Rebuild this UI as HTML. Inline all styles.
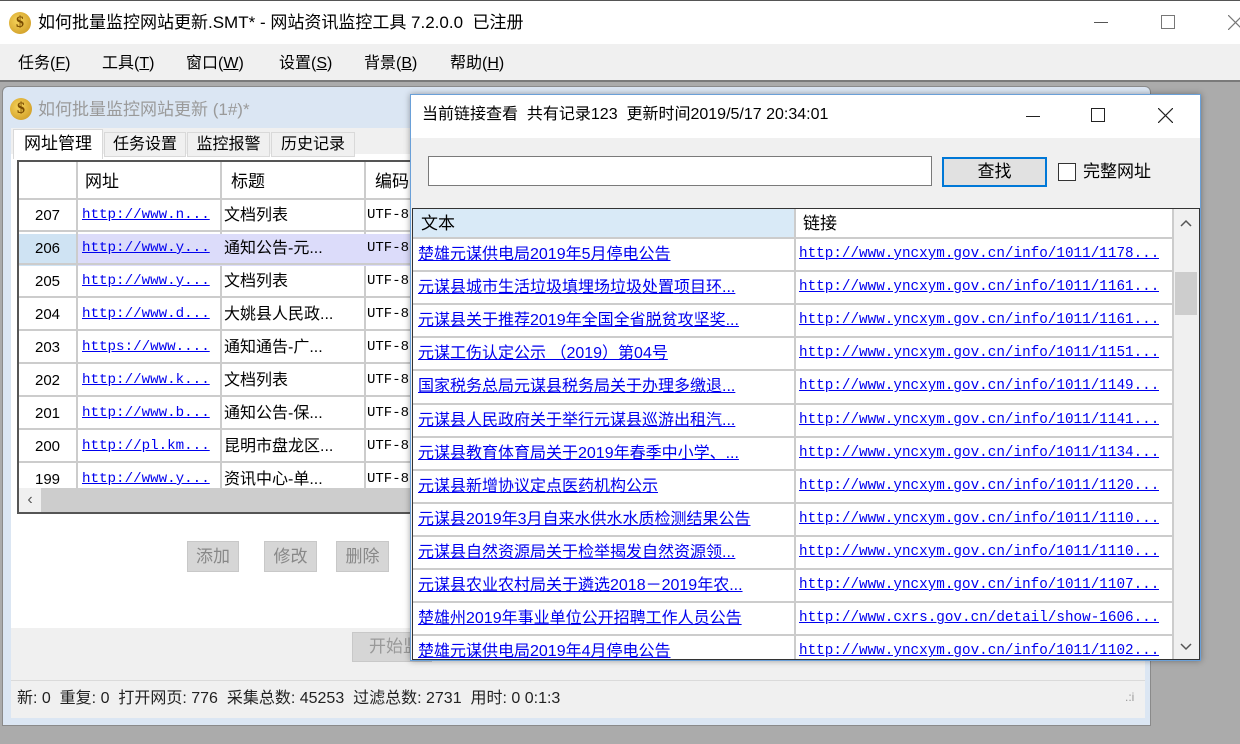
<!DOCTYPE html>
<html><head><meta charset="utf-8"><style>
*{margin:0;padding:0;box-sizing:border-box}
body{width:1240px;height:744px;position:relative;overflow:hidden;background:#ababab;font-family:"Liberation Sans","Microsoft YaHei","Noto Sans CJK SC",sans-serif;color:#000}
.a{position:absolute}
.mono{font-family:"Liberation Mono","Noto Sans CJK SC",monospace}
.lk{color:#0000ee;text-decoration:underline}
.cell{position:absolute;white-space:nowrap;overflow:hidden;font-size:16px;line-height:33px}
</style></head><body>
<div class="a" style="left:0;top:0;width:1240px;height:44px;background:#fff;border-top:1px solid #555"></div>
<div class="a" style="left:9px;top:12px;width:22px;height:22px;border-radius:50%;background:radial-gradient(circle at 40% 40%,#f6d35a,#c8921c);color:#7a4b00;font:bold 16px/22px 'Liberation Serif';text-align:center">$</div>
<div class="a" style="left:38px;top:11px;font-size:17px;line-height:24px;white-space:nowrap">如何批量监控网站更新.SMT* - 网站资讯监控工具 7.2.0.0&nbsp; 已注册</div>
<div class="a" style="left:1094px;top:22px;width:14px;height:1px;background:#555"></div>
<div class="a" style="left:1161px;top:15px;width:14px;height:14px;border:1px solid #777"></div>
<svg class="a" style="left:1228px;top:15px" width="15" height="15"><path d="M0 0L15 15M15 0L0 15" stroke="#777" stroke-width="1.2"/></svg>
<div class="a" style="left:0;top:44px;width:1240px;height:38px;background:#f0f0f0;border-bottom:2px solid #7a7a7a"></div>
<div class="a" style="left:18px;top:54px;font-size:16px;line-height:20px">任务(<u>F</u>)</div>
<div class="a" style="left:102px;top:54px;font-size:16px;line-height:20px">工具(<u>T</u>)</div>
<div class="a" style="left:186px;top:54px;font-size:16px;line-height:20px">窗口(<u>W</u>)</div>
<div class="a" style="left:279px;top:54px;font-size:16px;line-height:20px">设置(<u>S</u>)</div>
<div class="a" style="left:364px;top:54px;font-size:16px;line-height:20px">背景(<u>B</u>)</div>
<div class="a" style="left:450px;top:54px;font-size:16px;line-height:20px">帮助(<u>H</u>)</div>

<div class="a" style="left:2px;top:86px;width:1149px;height:640px;background:#dbe6f3;border:1px solid #8a8a8a;border-radius:6px 6px 0 0"></div>
<div class="a" style="left:10px;top:98px;width:22px;height:22px;border-radius:50%;background:radial-gradient(circle at 40% 40%,#f6d35a,#c8921c);color:#7a4b00;font:bold 16px/22px 'Liberation Serif';text-align:center">$</div>
<div class="a" style="left:38px;top:98px;font-size:17px;line-height:24px;color:#9a9a9a;white-space:nowrap">如何批量监控网站更新 (1#)*</div>
<div class="a" style="left:11px;top:128px;width:1134px;height:590px;background:#f0f0f0"></div>
<div class="a" style="left:11px;top:154px;width:1134px;height:474px;background:#fff"></div>
<div class="a" style="left:104px;top:132px;width:82px;height:25px;background:#f0f0f0;border:1px solid #d9d9d9;font-size:16px;line-height:24px;text-align:center">任务设置</div>
<div class="a" style="left:187px;top:132px;width:83px;height:25px;background:#f0f0f0;border:1px solid #d9d9d9;font-size:16px;line-height:24px;text-align:center">监控报警</div>
<div class="a" style="left:271px;top:132px;width:84px;height:25px;background:#f0f0f0;border:1px solid #d9d9d9;font-size:16px;line-height:24px;text-align:center">历史记录</div>
<div class="a" style="left:13px;top:129px;width:90px;height:30px;background:#fff;border:1px solid #d9d9d9;border-bottom:none;font-size:17px;line-height:28px;text-align:center">网址管理</div>
<div class="a" style="left:17px;top:160px;width:420px;height:354px;border:2px solid #555;border-right:none;background:#fff;overflow:hidden">
 <div class="a" style="left:0;top:0;width:420px;height:38px;border-bottom:2px solid #ccc"></div>
 <div class="a" style="left:57px;top:0;width:2px;height:330px;background:#ccc"></div>
 <div class="a" style="left:201px;top:0;width:2px;height:330px;background:#ccc"></div>
 <div class="a" style="left:345px;top:0;width:2px;height:330px;background:#ccc"></div>
 <div class="cell" style="left:66px;top:3px;font-size:17px">网址</div>
 <div class="cell" style="left:212px;top:3px;font-size:17px">标题</div>
 <div class="cell" style="left:356px;top:3px;font-size:17px">编码</div>
 <div class="a" style="left:0;top:72px;width:57px;height:32px;background:#cfe3f3"></div>
 <div class="a" style="left:59px;top:72px;width:361px;height:32px;background:#dcdcfa"></div>
</div>
<div id="lrows"></div>
<div class="a" style="left:19px;top:488px;width:400px;height:24px;background:#cdcdcd"></div>
<div class="a" style="left:19px;top:488px;width:22px;height:24px;background:#f0f0f0;text-align:center;font-size:16px;line-height:24px;color:#555">‹</div>
<div class="a" style="left:187px;top:541px;width:52px;height:31px;background:#d6d6d6;border:1px solid #c8c8c8;color:#888;font-size:17px;line-height:29px;text-align:center">添加</div>
<div class="a" style="left:264px;top:541px;width:53px;height:31px;background:#d6d6d6;border:1px solid #c8c8c8;color:#888;font-size:17px;line-height:29px;text-align:center">修改</div>
<div class="a" style="left:336px;top:541px;width:53px;height:31px;background:#d6d6d6;border:1px solid #c8c8c8;color:#888;font-size:17px;line-height:29px;text-align:center">删除</div>
<div class="a" style="left:352px;top:632px;width:80px;height:30px;background:#d6d6d6;border:1px solid #c8c8c8;color:#999;font-size:17px;line-height:28px;padding-left:16px;white-space:nowrap;overflow:hidden">开始监控</div>
<div class="a" style="left:11px;top:680px;width:1134px;height:1px;background:#dadada"></div>
<div class="a" style="left:17px;top:688px;font-size:16px;line-height:22px;color:#222;white-space:nowrap">新: 0&nbsp; 重复: 0&nbsp; 打开网页: 776&nbsp; 采集总数: 45253&nbsp; 过滤总数: 2731&nbsp; 用时: 0 0:1:3</div>
<div class="a" style="left:1125px;top:690px;font-size:12px;color:#999">.:i</div>

<div class="a" style="left:410px;top:94px;width:791px;height:567px;background:#f0f0f0;border:1px solid #6aa0d8;box-shadow:0 0 6px rgba(0,0,0,.35)"></div>
<div class="a" style="left:411px;top:95px;width:789px;height:43px;background:#fff"></div>
<div class="a" style="left:422px;top:104px;font-size:16px;line-height:22px;white-space:nowrap">当前链接查看&nbsp; 共有记录123&nbsp; 更新时间2019/5/17 20:34:01</div>
<div class="a" style="left:1026px;top:116px;width:14px;height:1px;background:#222"></div>
<div class="a" style="left:1091px;top:108px;width:14px;height:14px;border:1px solid #222"></div>
<svg class="a" style="left:1158px;top:108px" width="15" height="15"><path d="M0 0L15 15M15 0L0 15" stroke="#222" stroke-width="1.2"/></svg>
<div class="a" style="left:428px;top:156px;width:504px;height:30px;background:#fff;border:1px solid #7a7a7a"></div>
<div class="a" style="left:942px;top:157px;width:105px;height:30px;background:#e1e1e1;border:2px solid #0078d7;font-size:17px;line-height:26px;text-align:center">查找</div>
<div class="a" style="left:1058px;top:163px;width:18px;height:18px;background:#fff;border:1px solid #333"></div>
<div class="a" style="left:1083px;top:160px;font-size:17px;line-height:24px">完整网址</div>
<div class="a" style="left:412px;top:208px;width:788px;height:452px;background:#fff;border:1px solid #333;overflow:hidden">
 <div class="a" style="left:0;top:0;width:381px;height:28px;background:#d9eaf7"></div>
 <div class="a" style="left:381px;top:0;width:2px;height:452px;background:#ccc"></div>
 <div class="a" style="left:759px;top:0;width:2px;height:452px;background:#ccc"></div>
 <div class="a" style="left:761px;top:0;width:27px;height:452px;background:#f0f0f0"></div>
 <div class="a" style="left:762px;top:63px;width:22px;height:43px;background:#cdcdcd"></div>
 <svg class="a" style="left:767px;top:10px" width="12" height="8"><path d="M1 7L6 2L11 7" fill="none" stroke="#555" stroke-width="1.5"/></svg>
 <svg class="a" style="left:767px;top:434px" width="12" height="8"><path d="M1 1L6 6L11 1" fill="none" stroke="#555" stroke-width="1.5"/></svg>
 <div class="cell" style="left:8px;top:-2px;font-size:17px">文本</div>
 <div class="cell" style="left:390px;top:-2px;font-size:17px">链接</div>
 <div id="rrows"></div>
</div>
<script>
var L=[["207","http://www.n...","文档列表"],["206","http://www.y...","通知公告-元..."],["205","http://www.y...","文档列表"],["204","http://www.d...","大姚县人民政..."],["203","https://www....","通知通告-广..."],["202","http://www.k...","文档列表"],["201","http://www.b...","通知公告-保..."],["200","http://pl.km...","昆明市盘龙区..."],["199","http://www.y...","资讯中心-单..."]];
var h="";
L.forEach(function(r,i){var t=199+i*33;
h+='<div class="a" style="left:19px;top:'+(t+31)+'px;width:400px;height:2px;background:#ccc"></div>';
h+='<div class="cell" style="left:19px;top:'+t+'px;width:57px;text-align:center;font-size:15px">'+r[0]+'</div>';
h+='<div class="cell mono lk" style="left:82px;top:'+t+'px;font-size:14.2px">'+r[1]+'</div>';
h+='<div class="cell" style="left:224px;top:'+t+'px">'+r[2]+'</div>';
h+='<div class="cell mono" style="left:367px;top:'+t+'px;width:43px;font-size:14px">UTF-8</div>';});
document.getElementById("lrows").outerHTML=h;
var R=[["楚雄元谋供电局2019年5月停电公告","1011/1178"],["元谋县城市生活垃圾填埋场垃圾处置项目环...","1011/1161"],["元谋县关于推荐2019年全国全省脱贫攻坚奖...","1011/1161"],["元谋工伤认定公示 （2019）第04号","1011/1151"],["国家税务总局元谋县税务局关于办理多缴退...","1011/1149"],["元谋县人民政府关于举行元谋县巡游出租汽...","1011/1141"],["元谋县教育体育局关于2019年春季中小学、...","1011/1134"],["元谋县新增协议定点医药机构公示","1011/1120"],["元谋县2019年3月自来水供水水质检测结果公告","1011/1110"],["元谋县自然资源局关于检举揭发自然资源领...","1011/1110"],["元谋县农业农村局关于遴选2018－2019年农...","1011/1107"],["楚雄州2019年事业单位公开招聘工作人员公告",""],["楚雄元谋供电局2019年4月停电公告","1011/1102"]];
var g="";
R.forEach(function(r,i){var t=29+i*33.1;
g+='<div class="a" style="left:0;top:'+(t-1)+'px;width:761px;height:2px;background:#ccc"></div>';
g+='<div class="cell lk" style="left:5px;top:'+t+'px;width:374px">'+r[0]+'</div>';
var u=r[1]?"http://www.yncxym.gov.cn/info/"+r[1]+"...":"http://www.cxrs.gov.cn/detail/show-1606...";
g+='<div class="cell mono lk" style="left:386px;top:'+t+'px;font-size:14.3px">'+u+'</div>';});
document.getElementById("rrows").outerHTML=g;
</script>
</body></html>
